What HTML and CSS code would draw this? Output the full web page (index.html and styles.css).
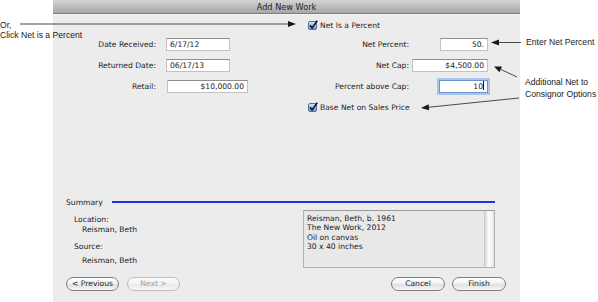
FILE: index.html
```html
<!DOCTYPE html>
<html>
<head>
<meta charset="utf-8">
<link rel="stylesheet" href="styles.css">
</head>
<body>
<div class="window">
  <div class="titlebar">Add New Work</div>
  <div class="form">
    <label class="check check-top">
      <svg class="cb" width="10" height="10" viewBox="0 0 10 10"><defs><linearGradient id="g1" x1="0" y1="0" x2="0" y2="1"><stop offset="0" stop-color="#d6e8fb"/><stop offset="1" stop-color="#5d9be4"/></linearGradient></defs><rect x="0.5" y="1.5" width="8" height="8" rx="1.5" fill="url(#g1)" stroke="#52709c"/><path d="M2 5.2 L4.1 8 L9.3 0.6" fill="none" stroke="#111" stroke-width="1.6"/></svg>
      <span>Net Is a Percent</span>
    </label>

    <div class="lbl l1">Date Received:</div>
    <div class="field f-left w64 l1c">6/17/12</div>
    <div class="lbl r1">Net Percent:</div>
    <div class="field f-right w48 r1c">50.</div>

    <div class="lbl l2">Returned Date:</div>
    <div class="field f-left w64 l2c">06/17/13</div>
    <div class="lbl r2">Net Cap:</div>
    <div class="field f-right w76 r2c">$4,500.00</div>

    <div class="lbl l3">Retail:</div>
    <div class="field f-left f-num w81 l3c">$10,000.00</div>
    <div class="lbl r3">Percent above Cap:</div>
    <div class="field f-right w49 r3c focus">10<span class="caret"></span></div>

    <label class="check check-bottom">
      <svg class="cb" width="10" height="10" viewBox="0 0 10 10"><defs><linearGradient id="g2" x1="0" y1="0" x2="0" y2="1"><stop offset="0" stop-color="#d6e8fb"/><stop offset="1" stop-color="#5d9be4"/></linearGradient></defs><rect x="0.5" y="1.5" width="8" height="8" rx="1.5" fill="url(#g2)" stroke="#52709c"/><path d="M2 5.2 L4.1 8 L9.3 0.6" fill="none" stroke="#111" stroke-width="1.6"/></svg>
      <span>Base Net on Sales Price</span>
    </label>
  </div>

  <div class="summary-head">
    <span>Summary</span>
    <div class="rule"></div>
  </div>

  <div class="summary-body">
    <div class="info">
      <div class="info-label">Location:</div>
      <div class="info-value">Reisman, Beth</div>
      <div class="info-label second">Source:</div>
      <div class="info-value">Reisman, Beth</div>
    </div>
    <div class="textbox">
      <div class="textbox-text">
        <div>Reisman, Beth, b. 1961</div>
        <div>The New Work, 2012</div>
        <div>Oil on canvas</div>
        <div>30 x 40 inches</div>
      </div>
      <div class="scrollbar"></div>
    </div>
  </div>

  <div class="buttons">
    <div class="btn">&lt; Previous</div>
    <div class="btn disabled">Next &gt;</div>
    <div class="spacer"></div>
    <div class="btn wide">Cancel</div>
    <div class="btn wide">Finish</div>
  </div>
</div>

<div class="note note-or">Or,<br>Click Net is a Percent</div>
<div class="note note-enter">Enter Net Percent</div>
<div class="note note-add">Additional Net to<br>Consignor Options</div>

<svg class="arrows" width="598" height="302" viewBox="0 0 598 302">
  <g stroke="#4a4a4a" stroke-width="1" fill="none">
    <line x1="20" y1="24" x2="289" y2="24"/>
    <line x1="498" y1="42.5" x2="521" y2="42.5"/>
    <line x1="501" y1="69.5" x2="517" y2="77"/>
    <line x1="428" y1="107.3" x2="519" y2="98"/>
  </g>
  <g fill="#1a1a1a">
    <polygon points="296,24 288,21 288,27"/>
    <polygon points="491,42.5 499,39.5 499,45.5"/>
    <polygon points="494,66.5 502,66.6 499.5,72.2"/>
    <polygon points="421,108 428.6,104.2 429.2,110.2"/>
  </g>
</svg>
</body>
</html>
```

FILE: styles.css
```css
html, body {
  margin: 0;
  padding: 0;
}

body {
  width: 598px;
  height: 302px;
  overflow: hidden;
  position: relative;
  background: #ffffff;
  font-family: "DejaVu Sans", "Liberation Sans", sans-serif;
  font-size: 7.6px;
  color: #222;
}

.window {
  margin-left: 53px;
  width: 467px;
  height: 302px;
  background: #ececec;
  display: flex;
  flex-direction: column;
}

.titlebar {
  height: 13px;
  line-height: 14px;
  text-align: center;
  font-size: 8.2px;
  color: #1e1e1e;
  background: linear-gradient(#d3d3d3, #b9b9b9 60%, #a7a7a7);
  border-bottom: 1px solid #7c7c7c;
  box-shadow: 0 1px 0 #f6f6f6;
}

.form {
  margin-top: 4px;
  display: grid;
  grid-template-columns: 103px 152px 101px 79px;
  grid-template-rows: 12px 13px 13px 13px 12px;
  row-gap: 8px;
}

.check {
  grid-column: 3 / 5;
  display: flex;
  align-items: center;
  gap: 2px;
}

.check-top {
  grid-row: 1;
  align-self: end;
}

.check-bottom {
  grid-row: 5;
  align-self: center;
}

.cb {
  display: block;
  flex: none;
}

.lbl {
  text-align: right;
  align-self: center;
  white-space: nowrap;
}

.field {
  box-sizing: border-box;
  height: 13px;
  line-height: 11px;
  background: #fff;
  border: 1px solid #c2c2c2;
  border-top-color: #8e8e8e;
  padding: 0 3px;
  white-space: nowrap;
}

.f-left {
  margin-left: 10px;
  justify-self: start;
}

.f-num {
  margin-left: 11px;
  text-align: right;
}

.f-right {
  justify-self: end;
  text-align: right;
}

.w64 { width: 64px; }
.w81 { width: 81px; }
.w48 { width: 48px; }
.w76 { width: 76px; }
.w49 { width: 49px; }

.l1 { grid-row: 2; grid-column: 1; }
.l1c { grid-row: 2; grid-column: 2; }
.r1 { grid-row: 2; grid-column: 3; }
.r1c { grid-row: 2; grid-column: 4; }
.l2 { grid-row: 3; grid-column: 1; }
.l2c { grid-row: 3; grid-column: 2; }
.r2 { grid-row: 3; grid-column: 3; }
.r2c { grid-row: 3; grid-column: 4; }
.l3 { grid-row: 4; grid-column: 1; }
.l3c { grid-row: 4; grid-column: 2; }
.r3 { grid-row: 4; grid-column: 3; }
.r3c { grid-row: 4; grid-column: 4; }

.focus {
  border-color: #6d93c9;
  box-shadow: 0 0 0 2px #a9c5ea;
}

.caret {
  display: inline-block;
  width: 1px;
  height: 9px;
  background: #111;
  vertical-align: -1px;
  margin-left: 0;
}

.summary-head {
  margin-top: 84px;
  height: 10px;
  display: flex;
  align-items: center;
  padding-left: 13px;
  padding-right: 25px;
}

.rule {
  flex: 1;
  height: 2px;
  margin-left: 9px;
  background: #2430ef;
}

.summary-body {
  margin-top: 3px;
  display: flex;
  padding-right: 25px;
}

.info {
  padding-left: 21px;
  padding-top: 5px;
  line-height: 10px;
}

.info-value {
  padding-left: 8px;
}

.info-label.second {
  margin-top: 7px;
  margin-bottom: 4px;
}

.textbox {
  margin-left: auto;
  width: 192px;
  height: 58px;
  box-sizing: border-box;
  border: 1px solid #b2b2b2;
  border-top-color: #9a9a9a;
  background: #e8e8e8;
  display: flex;
}

.textbox-text {
  flex: 1;
  padding: 3px 0 0 3px;
  line-height: 9.3px;
}

.scrollbar {
  width: 9px;
  background: linear-gradient(90deg, #d8d8d8, #fbfbfb 40%, #f2f2f2 80%, #dcdcdc);
  border-left: 1px solid #c8c8c8;
}

.buttons {
  margin-top: 9px;
  display: flex;
  padding-left: 13px;
  padding-right: 14px;
}

.btn {
  box-sizing: border-box;
  width: 53px;
  height: 14px;
  line-height: 12px;
  text-align: center;
  border: 1px solid #7f7f7f;
  border-radius: 7px;
  background: linear-gradient(#ffffff, #f1f1f1 45%, #e0e0e0 55%, #f7f7f7);
  color: #1e1e1e;
  margin-right: 8px;
}

.btn.disabled {
  border-color: #bdbdbd;
  color: #a3a3a3;
  background: linear-gradient(#fbfbfb, #f1f1f1 50%, #ebebeb 55%, #f5f5f5);
}

.btn.wide {
  width: 54px;
  margin-right: 0;
  margin-left: 7px;
}

.spacer {
  flex: 1;
}

.note {
  position: absolute;
  font-family: "Liberation Sans", Arial, sans-serif;
  font-size: 8.6px;
  color: #1a1a1a;
  white-space: nowrap;
}

.note-or {
  left: 0;
  top: 20px;
  line-height: 10px;
}

.note-enter {
  left: 526px;
  top: 37px;
  line-height: 10px;
}

.note-add {
  left: 525px;
  top: 76px;
  line-height: 12px;
}

.arrows {
  position: absolute;
  left: 0;
  top: 0;
  pointer-events: none;
}
```
